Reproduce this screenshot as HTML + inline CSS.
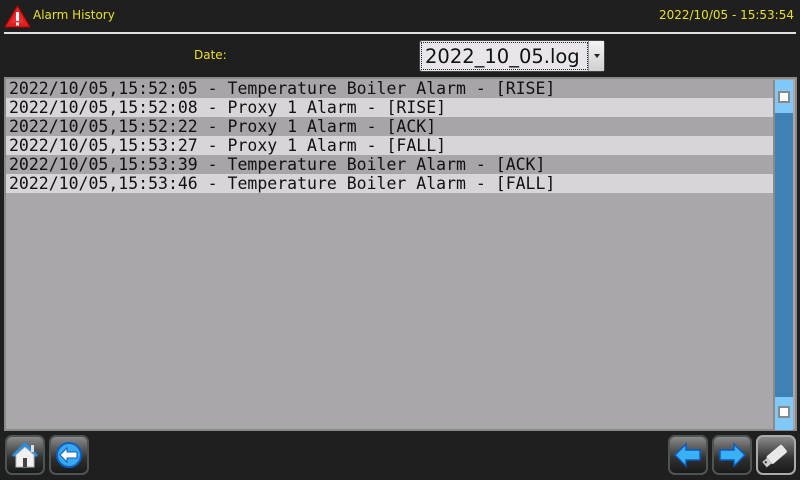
<!DOCTYPE html>
<html><head><style>
*{margin:0;padding:0;box-sizing:border-box}
body{width:800px;height:480px;background:#1f1f1f;position:relative;overflow:hidden;font-family:"DejaVu Sans","Liberation Sans",sans-serif}
.abs{position:absolute}
.title{left:33px;top:8px;color:#e8e020;font-size:12px}
.time{right:6px;top:8px;color:#e8e020;font-size:12px}
.line{left:4px;top:32px;width:792px;height:2px;background:#e0e0e0}
.date{left:194px;top:48px;color:#e8e020;font-size:12px}
.dd{left:419px;top:40px;width:186px;height:32px;background:#e8e6ea;border:1px solid #444;border-radius:3px}
.dd .t{position:absolute;left:1px;top:1px;width:167px;height:28px;border:1px dotted #222;font-size:19.5px;line-height:27px;padding-left:3px;color:#111;white-space:nowrap;overflow:hidden}
.dd .a{position:absolute;right:0;top:0;width:16px;height:30px;border-left:1px solid #999;background:linear-gradient(#f4f4f4,#d0d0d0)}
.dd .a:after{content:"";position:absolute;left:5px;top:13px;border:3px solid transparent;border-top:4px solid #222}
.list{left:4px;top:77px;width:793px;height:354px;background:#aaa7aa;border:2px solid #8a8a8a}
.row{position:absolute;left:0;width:767px;height:19px;font-family:"DejaVu Sans Mono",monospace;font-size:16.5px;line-height:20px;padding-left:3px;color:#111;white-space:pre}
.d{background:#a8a5a8}.l{background:#d8d5d8}
.sb{left:767px;top:1px;width:20px;height:350px;background:#3f80b5;border-left:2px solid #8a8a8a}
.sbl{position:absolute;left:0;width:18px;height:33px;background:#80c8f8}
.knob{position:absolute;left:3px;width:12px;height:12px;background:#fff;border:2px solid #888}
.btn{top:435px;width:40px;height:40px;border-radius:7px;border:2px solid #4e554e;background:linear-gradient(#8a8a8a,#303030 60%,#1a1a1a)}
</style></head><body>
<svg class="abs" style="left:4px;top:5px" width="27" height="23" viewBox="0 0 27 23"><path d="M13.5 1 L26 22 L1 22 Z" fill="#e02020" stroke="#b00" stroke-linejoin="round"/><path d="M13.5 5 L20 18 L7 18Z" fill="#f04040" opacity=".5"/><rect x="12" y="7" width="3" height="9" fill="#fff"/><rect x="12" y="17.5" width="3" height="3" fill="#fff"/></svg>
<div class="abs title">Alarm History</div>
<div class="abs time">2022/10/05 - 15:53:54</div>
<div class="abs line"></div>
<div class="abs date">Date:</div>
<div class="abs dd"><div class="t">2022_10_05.log</div><div class="a"></div></div>
<div class="abs list">
<div class="row d" style="top:0">2022/10/05,15:52:05 - Temperature Boiler Alarm - [RISE]</div>
<div class="row l" style="top:19px">2022/10/05,15:52:08 - Proxy 1 Alarm - [RISE]</div>
<div class="row d" style="top:38px">2022/10/05,15:52:22 - Proxy 1 Alarm - [ACK]</div>
<div class="row l" style="top:57px">2022/10/05,15:53:27 - Proxy 1 Alarm - [FALL]</div>
<div class="row d" style="top:76px">2022/10/05,15:53:39 - Temperature Boiler Alarm - [ACK]</div>
<div class="row l" style="top:95px">2022/10/05,15:53:46 - Temperature Boiler Alarm - [FALL]</div>
<div class="abs sb"><div class="sbl" style="top:0"></div><div class="knob" style="top:11px"></div><div class="sbl" style="top:317px"></div><div class="knob" style="top:326px"></div></div>
</div>
<div class="abs btn" style="left:5px"><svg width="36" height="36" viewBox="0 0 36 36"><path d="M6 19 L18 7 L30 19" fill="none" stroke="#2a8ee0" stroke-width="3"/><rect x="24" y="8" width="3" height="7" fill="#ddd"/><path d="M9 18 L18 10 L27 18 L27 30 L9 30Z" fill="#f0f0f0" stroke="#bbb"/><rect x="16" y="21" width="4" height="9" fill="#444"/></svg></div>
<div class="abs btn" style="left:49px"><svg width="36" height="36" viewBox="0 0 36 36"><circle cx="18" cy="18" r="12" fill="#3aa8f0" stroke="#0a60c0" stroke-width="2"/><path d="M9 18 L16 11 L16 15 L26 15 L26 21 L16 21 L16 25Z" fill="#fff" stroke="#0a60c0"/></svg></div>
<div class="abs btn" style="left:668px"><svg width="36" height="36" viewBox="0 0 36 36"><path d="M5 18 L16 7 L16 13 L30 13 L30 23 L16 23 L16 29Z" fill="#3ab0f5" stroke="#0a5ac0" stroke-width="1.5"/></svg></div>
<div class="abs btn" style="left:712px"><svg width="36" height="36" viewBox="0 0 36 36"><path d="M31 18 L20 7 L20 13 L6 13 L6 23 L20 23 L20 29Z" fill="#3ab0f5" stroke="#0a5ac0" stroke-width="1.5"/></svg></div>
<div class="abs btn" style="left:756px;border-color:#aaa"><svg width="36" height="36" viewBox="0 0 36 36"><g transform="rotate(-40 18 18)"><rect x="9" y="13" width="20" height="10" rx="2" fill="#e8e8e8"/><rect x="3" y="14.5" width="7" height="7" fill="#ccc"/><rect x="4.5" y="16" width="2" height="2" fill="#333"/></g></svg></div>
</body></html>
